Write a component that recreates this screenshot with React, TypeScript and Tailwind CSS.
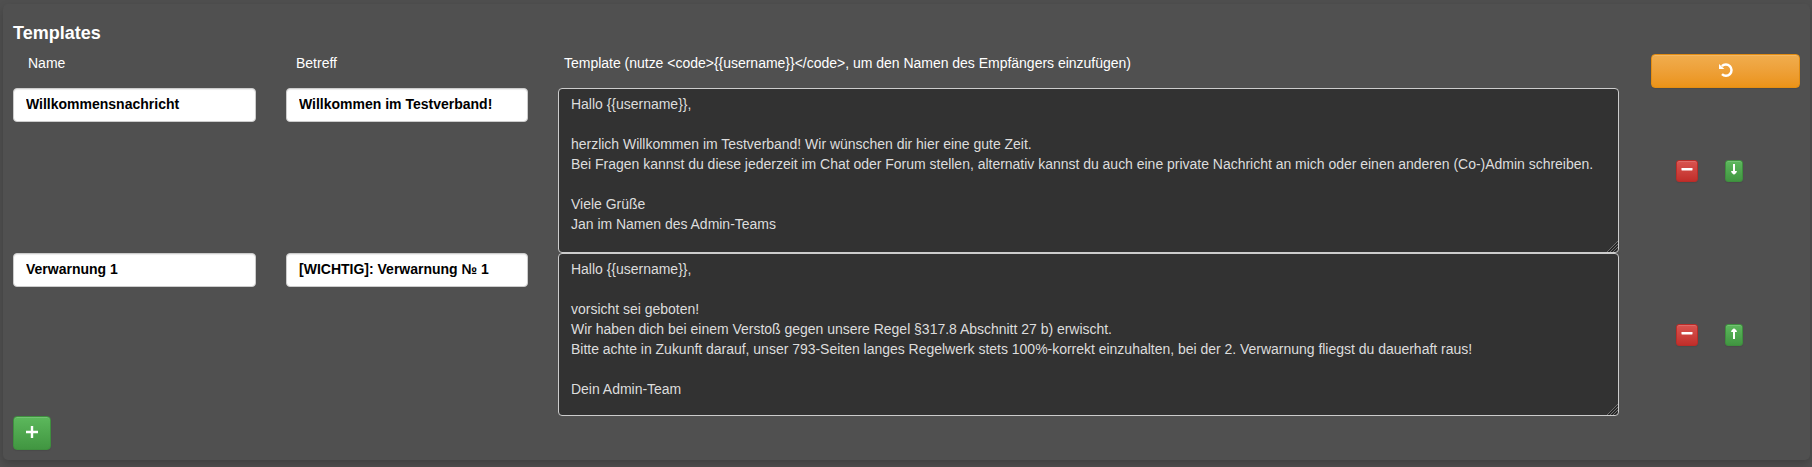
import React from "react";

const rows = [
  {
    name: "Willkommensnachricht",
    subject: "Willkommen im Testverband!",
    height: "h-[165px]",
    body: "Hallo {{username}},\n\nherzlich Willkommen im Testverband! Wir wünschen dir hier eine gute Zeit.\nBei Fragen kannst du diese jederzeit im Chat oder Forum stellen, alternativ kannst du auch eine private Nachricht an mich oder einen anderen (Co-)Admin schreiben.\n\nViele Grüße\nJan im Namen des Admin-Teams",
    actions: "pt-[72px]",
    direction: "down",
  },
  {
    name: "Verwarnung 1",
    subject: "[WICHTIG]: Verwarnung № 1",
    height: "h-[163px]",
    body: "Hallo {{username}},\n\nvorsicht sei geboten!\nWir haben dich bei einem Verstoß gegen unsere Regel §317.8 Abschnitt 27 b) erwischt.\nBitte achte in Zukunft darauf, unser 793-Seiten langes Regelwerk stets 100%-korrekt einzuhalten, bei der 2. Verwarnung fliegst du dauerhaft raus!\n\nDein Admin-Team",
    actions: "pt-[71px]",
    direction: "up",
  },
];

const buttonBase =
  "flex justify-center border shadow-[inset_0_1px_0_rgba(255,255,255,0.15),0_1px_1px_rgba(0,0,0,0.075)]";
const green = "border-[#3e8f3e] bg-linear-to-b from-[#5cb85c] to-[#419641]";
const inputClass =
  "h-[34px] rounded-[4px] border border-[#ccc] bg-white px-3 pt-[5px] pb-[7px] font-bold text-black shadow-[inset_0_1px_1px_rgba(0,0,0,0.075)]";

export default function App() {
  return (
    <div className="h-[467px] overflow-hidden bg-[#4f4f4f] pt-1 pr-0.5 pl-[3px] font-['Liberation_Sans',Arial,sans-serif] text-[14px] leading-5 text-white">
      <div className="h-[456px] rounded-[5px] bg-[#505050] pt-[18px] pl-2.5 shadow-[0_4px_8px_rgba(0,0,0,0.2)]">
        <h3 className="h-8 text-[18px] leading-[22px] font-bold">Templates</h3>
        <div className="grid h-[34px] grid-cols-[268px_268px_1102px_149px]">
          <span className="-mt-px pl-[15px]">Name</span>
          <span className="-mt-px pl-[15px]">Betreff</span>
          <span className="-mt-px pl-[15px] tracking-[-0.015px]">
            {"Template (nutze <code>{{username}}</code>, um den Namen des Empfängers einzufügen)"}
          </span>
          <button
            aria-label="Zurücksetzen"
            className={`${buttonBase} h-[34px] rounded-[4px] border-[#e38d13] bg-linear-to-b from-[#f0ad4e] to-[#eb9316] pt-2`}
          >
            <svg width="14" height="14" viewBox="0 0 14 14">
              <path d="M2.9 3.2A5.6 5.6 0 1 1 3 11.1" fill="none" stroke="#fff" strokeWidth="2.5" />
              <path d="M0 .9V6H5.4Z" fill="#fff" />
            </svg>
          </button>
        </div>
        {rows.map((row) => (
          <div key={row.name} className="grid grid-cols-[273px_272px_1061px_1fr] items-start">
            <input className={`${inputClass} w-[243px]`} defaultValue={row.name} />
            <input className={`${inputClass} w-[242px]`} defaultValue={row.subject} />
            <div className="relative">
              <textarea
                className={`${row.height} block w-[1061px] resize-none overflow-hidden rounded-[4px] border border-[#ccc] bg-[#323232] px-3 pt-[5px] pb-1.5 tracking-[-0.017px] text-[#ddd]`}
                defaultValue={row.body}
              />
              <svg className="absolute right-px bottom-px" width="11" height="11" viewBox="0 0 11 11">
                <path d="M0 11L11 0M3 11L11 3M6 11L11 6M9 11L11 9" stroke="#777" strokeWidth="0.9" />
                <path d="M1.5 11L11 1.5M4.5 11L11 4.5M7.5 11L11 7.5" stroke="#1c1c1c" strokeWidth="0.9" />
              </svg>
            </div>
            <div className={`flex gap-[27px] pl-[57px] ${row.actions}`}>
              <button
                aria-label="Entfernen"
                className={`${buttonBase} h-[22px] w-[22px] rounded-[3px] border-[#b92c28] bg-linear-to-b from-[#d9534f] to-[#c12e2a] pt-[7px]`}
              >
                <svg width="12" height="3" viewBox="0 0 12 3">
                  <rect x="0.5" y="0" width="11" height="2.4" rx="0.4" fill="#fff" />
                </svg>
              </button>
              <button aria-label="Verschieben" className={`${buttonBase} ${green} h-[22px] w-[18px] rounded-[3px] pt-[3px]`}>
                <svg width="6" height="11" viewBox="0 0 6 11" className={row.direction === "down" ? "" : "rotate-180"}>
                  <path d="M2 0H4V7H6L5.2 9L3 10.8L.8 9L0 7H2Z" fill="#fff" />
                </svg>
              </button>
            </div>
          </div>
        ))}
        <button aria-label="Hinzufügen" className={`${buttonBase} ${green} h-[34px] w-[38px] rounded-[4px] pt-[9px]`}>
          <svg width="12" height="12" viewBox="0 0 12 12">
            <path d="M4.8 0H7.2V4.8H12V7.2H7.2V12H4.8V7.2H0V4.8H4.8Z" fill="#fff" />
          </svg>
        </button>
      </div>
    </div>
  );
}
